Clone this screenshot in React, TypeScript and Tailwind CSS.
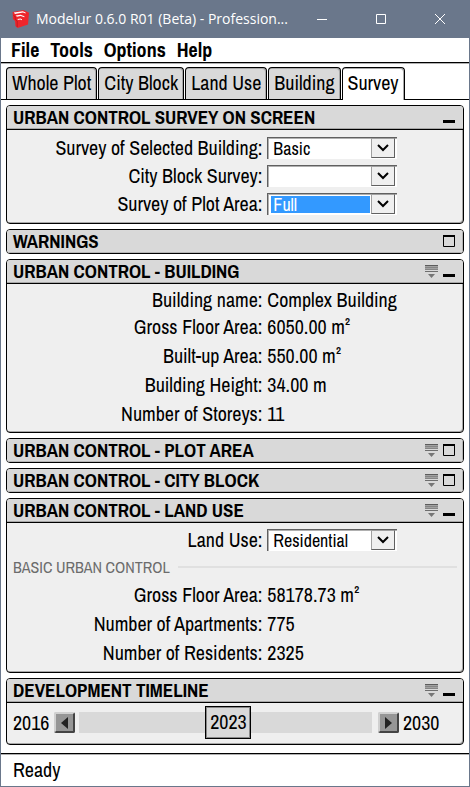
import { useState, type ReactNode } from "react";

const TABS = ["Whole Plot", "City Block", "Land Use", "Building", "Survey"];

const FIRST_YEAR = 2016;
const LAST_YEAR = 2030;

function SketchUpLogo() {
  return (
    <svg width="18" height="18" viewBox="0 0 18 18" aria-hidden="true">
      <path d="M0.6 2 11.4 0 17 2.8 16 14.4 5.6 18 3.4 16 3 11 1 9Z" fill="#ee252b" />
      <path d="M1.8 2.6 10.8 1.2 13.6 2.6 13.6 3.6 11 2.6 3 4Z" fill="#fff" />
      <path d="M3.6 5.6 8.6 4.8 12.4 6.2 12.4 7.2 8.6 6 5 6.8Z" fill="#fff" />
      <path d="M5.4 9 8.4 8.4 10 9.2V10.2L8.2 9.6 6 10Z" fill="#fff" />
      <path d="M1.4 5.4 3.2 6.6V9.4L5.2 11V17" fill="none" stroke="#b8161c" strokeWidth="0.8" />
    </svg>
  );
}

function TitleBar() {
  return (
    <header className="flex h-[38px] items-center bg-[#6a778b] pl-[11px] text-white">
      <SketchUpLogo />
      <h1 className="ml-[6px] min-w-0 flex-1 font-['Open_Sans','Noto_Sans',sans-serif] text-sm whitespace-nowrap">
        Modelur 0.6.0 R01 (Beta) - Profession...
      </h1>
      <div className="flex shrink-0">
        <button type="button" aria-label="Minimize" className="flex h-[38px] w-[58px] items-center justify-center">
          <svg width="10" height="10" viewBox="0 0 10 10"><path d="M0 5.5H10" stroke="#fff" /></svg>
        </button>
        <button type="button" aria-label="Maximize" className="flex h-[38px] w-[59px] items-center justify-center">
          <svg width="10" height="10" viewBox="0 0 10 10"><path d="M.5 .5H9.5V9.5H.5Z" fill="none" stroke="#fff" /></svg>
        </button>
        <button type="button" aria-label="Close" className="flex h-[38px] w-[59px] items-center justify-center">
          <svg width="10" height="10" viewBox="0 0 10 10"><path d="M0 0 10 10M10 0 0 10" stroke="#fff" /></svg>
        </button>
      </div>
    </header>
  );
}

function FilterIcon() {
  return (
    <svg width="13" height="13" viewBox="0 0 13 13" aria-hidden="true">
      <path d="M0 .5H13" stroke="#5c5c5c" />
      <path d="M0 1.5H13M0 3.5H13" stroke="#a2a2a2" />
      <path d="M0 2.5H13M0 4.5H13" stroke="#858585" />
      <path d="M0 6.5H13" stroke="#6e6e6e" />
      <path d="M3 9H10L6.5 13Z" fill="#757575" />
    </svg>
  );
}

type PanelProps = { title: string; filter?: boolean; children?: ReactNode };

function Panel({ title, filter = false, children }: PanelProps) {
  const open = Boolean(children);
  return (
    <section className="overflow-hidden rounded-[4px] border border-black bg-[#efefef] shadow-[inset_-1px_-1px_0_#a8a8a8]">
      <div
        className={
          open
            ? "flex h-6 items-center gap-[5px] border-b border-black bg-[#d9d9d9] pr-2 pb-px pl-[6px] shadow-[inset_0_-1px_0_#a8a8a8]"
            : "flex h-[23px] items-center gap-[5px] bg-[#d9d9d9] pr-2 pb-px pl-[6px] shadow-[inset_-1px_-1px_0_#b4b4b4]"
        }
      >
        <h2 className="flex-1 text-[19px] leading-6 font-bold">{title}</h2>
        {filter && (
          <button type="button" aria-label={`${title} display options`}>
            <FilterIcon />
          </button>
        )}
        <button type="button" aria-label={open ? `Collapse ${title}` : `Expand ${title}`}>
          <svg width="12" height="12" viewBox="0 0 12 12" aria-hidden="true">
            {open ? (
              <path d="M0 10.5H12" stroke="#000" strokeWidth="3" />
            ) : (
              <>
                <path d="M.5 .5H11.5V11.5H.5Z" fill="none" stroke="#000" />
                <path d="M0 1H12" stroke="#000" strokeWidth="2" />
              </>
            )}
          </svg>
        </button>
      </div>
      {children}
    </section>
  );
}

type SelectRowProps = { id: string; label: string; value: string; focused?: boolean };

function SelectRow({ id, label, value, focused = false }: SelectRowProps) {
  const [current, setCurrent] = useState(value);
  return (
    <div className="grid h-7 grid-cols-[56%_1fr] items-center gap-[5px]">
      <label htmlFor={id} className="text-right">
        {label}
      </label>
      <div className="relative h-[22px] w-[130px] border-t border-l border-[#606060] bg-white shadow-[inset_1px_1px_0_#b0b0b0]">
        <select
          id={id}
          value={current}
          onChange={(e) => setCurrent(e.target.value)}
          className={
            focused
              ? "block h-[21px] w-full appearance-none border-y-2 border-r-[27px] border-l-[3px] border-transparent bg-[#3399ff] bg-clip-padding pl-[2px] text-lg leading-[17px] text-white outline-none"
              : "block h-[21px] w-full appearance-none border-y-2 border-r-[27px] border-l-[3px] border-transparent pl-[2px] text-lg leading-[17px] outline-none"
          }
        >
          {["", "Basic", "Full", "Residential"].map((o) => (
            <option key={o} value={o}>
              {o}
            </option>
          ))}
        </select>
        <span className="pointer-events-none absolute top-0 right-[2px] flex h-5 w-6 items-center justify-center border border-t-[#a0a0a0] border-r-[#606060] border-b-[#606060] border-l-[#a0a0a0] bg-[#efefef]">
          <svg width="12" height="8" viewBox="0 0 12 8" aria-hidden="true">
            <path d="M1 1 6 6 11 1" fill="none" stroke="#000" strokeWidth="2" />
          </svg>
        </span>
      </div>
    </div>
  );
}

function ValueRow({ label, value, tight = false }: { label: string; value: string; tight?: boolean }) {
  return (
    <div className={tight ? "grid h-6 grid-cols-[56%_1fr] items-center gap-[5px]" : "grid h-[29px] grid-cols-[56%_1fr] items-center gap-[5px]"}>
      <dt className="text-right">{label}</dt>
      <dd>{value}</dd>
    </div>
  );
}

function Timeline() {
  const months = (LAST_YEAR - FIRST_YEAR) * 12;
  const [month, setMonth] = useState(86);
  const share = month / months;
  const stepButton =
    "flex size-[21px] shrink-0 items-center justify-center rounded-[2px] border-2 border-t-[#d0d0d0] border-r-[#444] border-b-[#444] border-l-[#d0d0d0] bg-[#969696]";
  return (
    <div className="flex h-[41px] items-center pr-6 pb-[2px] pl-[6px]">
      <span className="w-9">2016</span>
      <button type="button" aria-label="Earlier" className={`${stepButton} ml-[5px]`} onClick={() => setMonth(Math.max(0, month - 12))}>
        <svg width="7" height="12" viewBox="0 0 7 12"><path d="M7 0V12L0 6Z" fill="#222" /></svg>
      </button>
      <div className="relative mr-[6px] ml-1 h-[21px] flex-1 bg-[#d9d9d9]">
        <input
          type="range"
          aria-label="Development year"
          min={0}
          max={months}
          value={month}
          onChange={(e) => setMonth(Number(e.target.value))}
          className="block h-full w-full cursor-pointer opacity-0"
        />
        <output
          className="pointer-events-none absolute -top-[6px] flex h-[33px] w-[46px] items-center justify-center border border-black bg-[#d9d9d9] pb-px shadow-[inset_-1px_-1px_0_#888,inset_1px_1px_0_#888]"
          style={{ left: `calc((100% - 46px) * ${share})` }}
        >
          {FIRST_YEAR + Math.floor(month / 12)}
        </output>
      </div>
      <button type="button" aria-label="Later" className={`${stepButton} mr-1`} onClick={() => setMonth(Math.min(months, month + 12))}>
        <svg width="7" height="12" viewBox="0 0 7 12"><path d="M0 0V12L7 6Z" fill="#222" /></svg>
      </button>
      <span className="w-9">2030</span>
    </div>
  );
}

export default function App() {
  return (
    <div className="flex min-h-screen flex-col border-x border-b border-[#6a778b] bg-white font-['Archivo_Narrow','Liberation_Sans_Narrow','Roboto',sans-serif] text-xl leading-6 text-black">
      <TitleBar />
      <nav aria-label="Menu" className="flex h-[25px] items-center gap-[11px] border-b border-black pl-[10px] font-bold shadow-[0_1px_0_#b0b0b0]">
        <button type="button">File</button>
        <button type="button">Tools</button>
        <button type="button">Options</button>
        <button type="button">Help</button>
      </nav>
      <div role="tablist" className="mt-1 flex h-[33px] gap-[1px] border-b border-black pl-[5px]">
        {TABS.map((tab) => (
          <button
            key={tab}
            type="button"
            role="tab"
            aria-selected={tab === "Survey"}
            className={
              tab === "Survey"
                ? "-mb-px rounded-t-[4px] border border-b-0 border-black bg-white px-[5px] pb-[2px] whitespace-nowrap shadow-[inset_-1px_1px_0_#a8a8a8]"
                : "rounded-t-[4px] border border-b-0 border-black bg-[#d9d9d9] px-[5px] pb-px whitespace-nowrap shadow-[inset_-1px_1px_0_#a8a8a8]"
            }
          >
            {tab}
          </button>
        ))}
      </div>
      <main className="flex flex-1 flex-col gap-[5px] px-[5px] pt-[5px] pb-2">
        <Panel title="URBAN CONTROL SURVEY ON SCREEN">
          <div className="pt-1 pb-[5px]">
            <SelectRow id="building-survey" label="Survey of Selected Building:" value="Basic" />
            <SelectRow id="block-survey" label="City Block Survey:" value="" />
            <SelectRow id="plot-survey" label="Survey of Plot Area:" value="Full" focused />
          </div>
        </Panel>
        <Panel title="WARNINGS" />
        <Panel title="URBAN CONTROL - BUILDING" filter>
          <dl className="pt-1 pb-1">
            <ValueRow label="Building name:" value="Complex Building" tight />
            <ValueRow label="Gross Floor Area:" value="6050.00 m²" />
            <ValueRow label="Built-up Area:" value="550.00 m²" />
            <ValueRow label="Building Height:" value="34.00 m" />
            <ValueRow label="Number of Storeys:" value="11" />
          </dl>
        </Panel>
        <Panel title="URBAN CONTROL - PLOT AREA" filter />
        <Panel title="URBAN CONTROL - CITY BLOCK" filter />
        <Panel title="URBAN CONTROL - LAND USE" filter>
          <div className="pt-[3px] pb-[5px]">
            <SelectRow id="land-use" label="Land Use:" value="Residential" />
            <h3 className="flex h-[26px] items-center gap-2 px-[6px] text-base text-[#6c6c6c] after:h-[2px] after:flex-1 after:bg-[#e0e0e0]">
              BASIC URBAN CONTROL
            </h3>
            <dl>
              <ValueRow label="Gross Floor Area:" value="58178.73 m²" />
              <ValueRow label="Number of Apartments:" value="775" />
              <ValueRow label="Number of Residents:" value="2325" />
            </dl>
          </div>
        </Panel>
        <Panel title="DEVELOPMENT TIMELINE" filter>
          <Timeline />
        </Panel>
      </main>
      <footer className="flex h-[33px] items-center border-t border-black pl-3 shadow-[inset_0_1px_0_#b0b0b0]">
        Ready
      </footer>
    </div>
  );
}
